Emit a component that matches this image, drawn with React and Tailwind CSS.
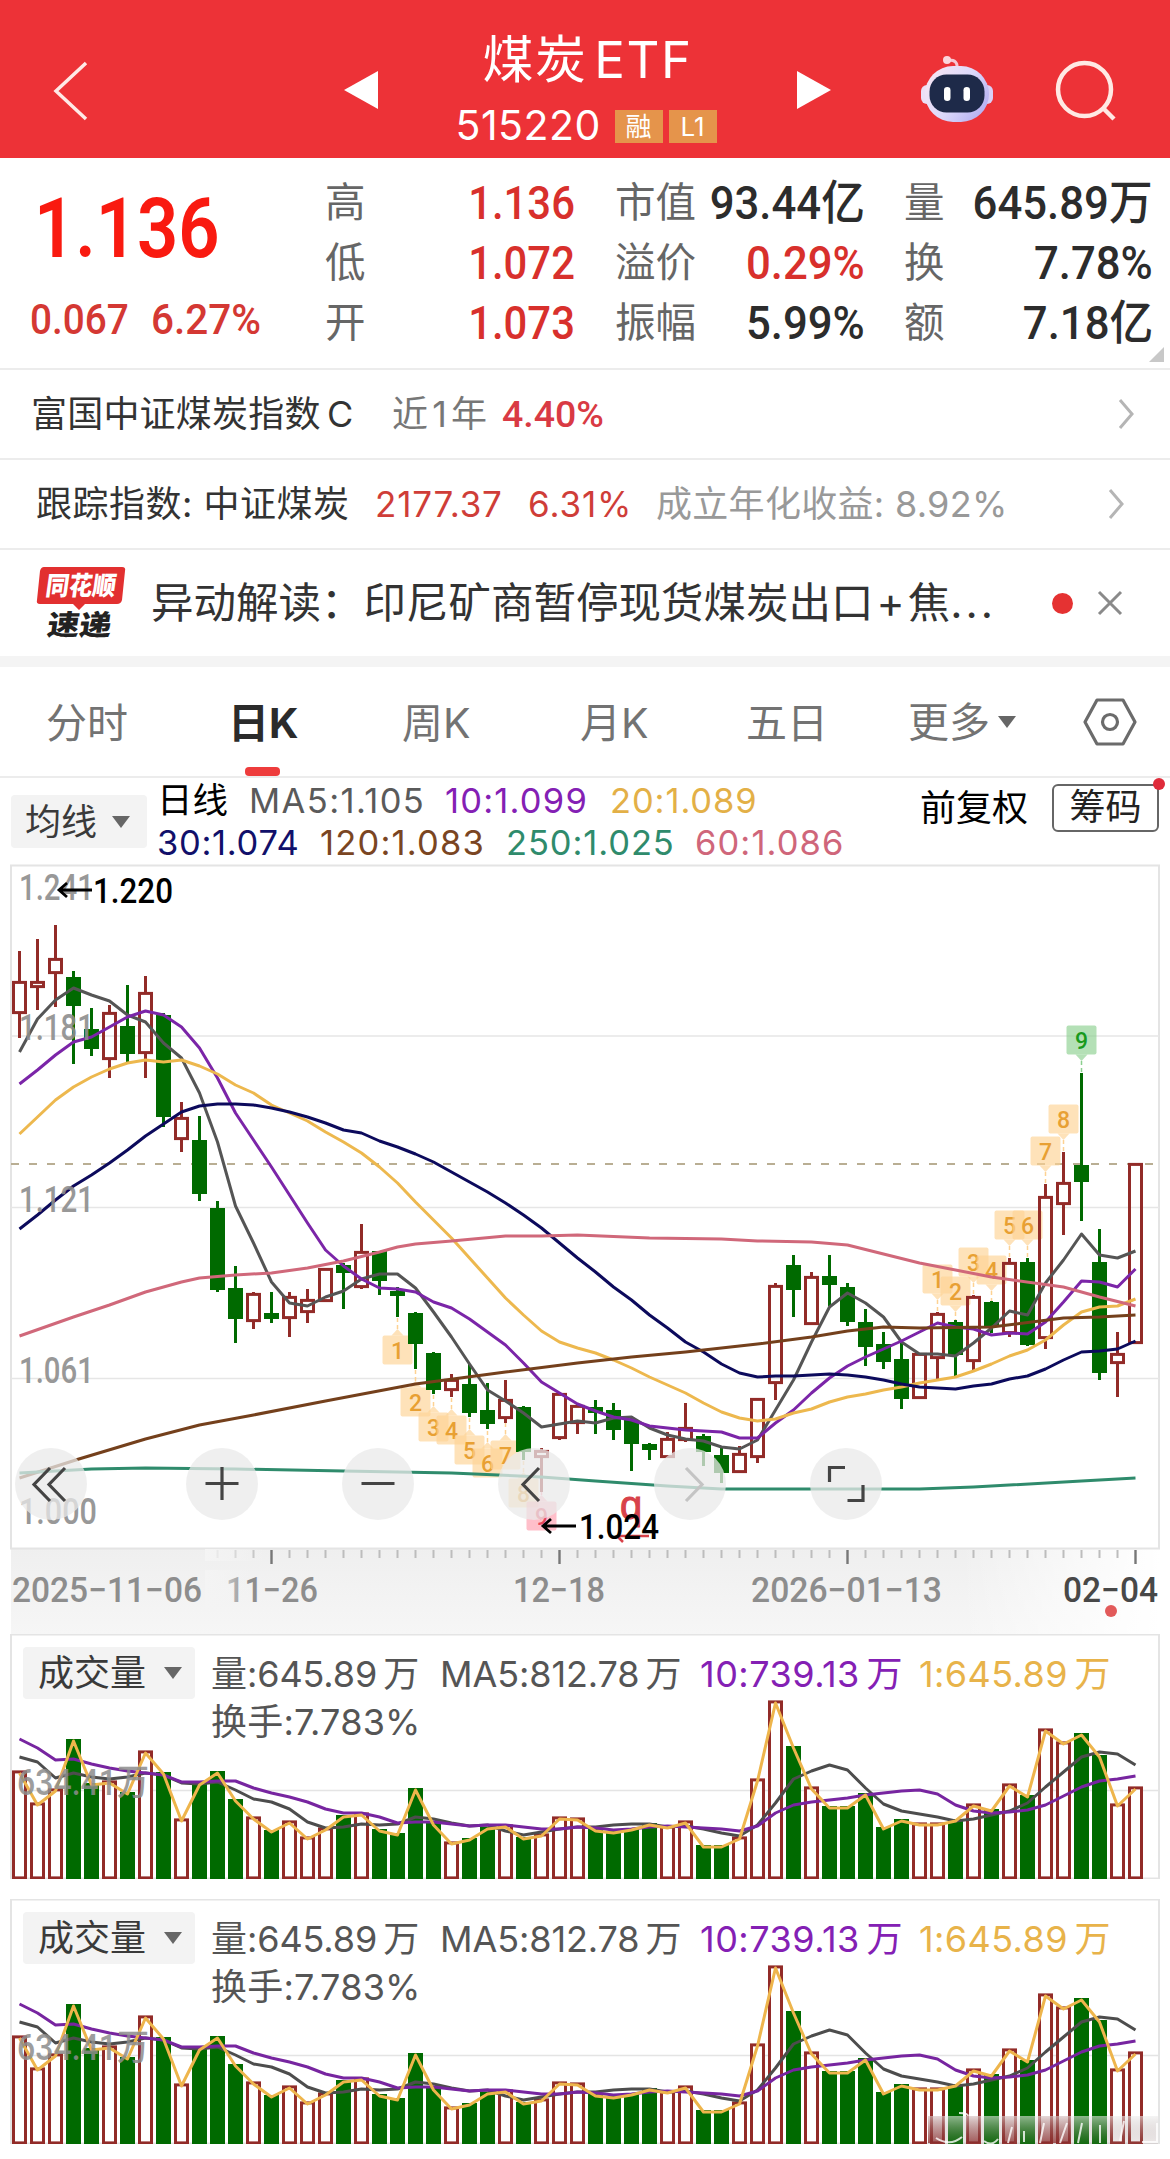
import React from "react";

// Candle: [direction, high, body top, body bottom, low], in chart pixels
const candles = [
  ["r", 951, 981, 1014, 1038], ["r", 939, 981, 988, 1010], ["r", 925, 958, 974, 1007], ["g", 971, 977, 1006, 1064],
  ["g", 1008, 1029, 1049, 1056], ["r", 1005, 1012, 1060, 1078], ["g", 985, 1026, 1054, 1062], ["r", 976, 992, 1054, 1078],
  ["g", 1013, 1015, 1117, 1127], ["r", 1102, 1117, 1140, 1152], ["g", 1116, 1140, 1194, 1201], ["g", 1201, 1208, 1290, 1292],
  ["g", 1266, 1288, 1319, 1343], ["r", 1292, 1293, 1322, 1329], ["g", 1292, 1313, 1319, 1323], ["r", 1292, 1296, 1319, 1337],
  ["r", 1289, 1299, 1313, 1323], ["r", 1268, 1268, 1302, 1302], ["g", 1263, 1265, 1273, 1309], ["r", 1224, 1251, 1288, 1289],
  ["g", 1251, 1251, 1281, 1295], ["g", 1287, 1291, 1296, 1317], ["g", 1312, 1313, 1344, 1369], ["g", 1352, 1353, 1390, 1394],
  ["r", 1374, 1379, 1391, 1397], ["g", 1364, 1384, 1413, 1417], ["g", 1383, 1410, 1424, 1429], ["r", 1380, 1399, 1419, 1423],
  ["g", 1406, 1407, 1452, 1460], ["r", 1448, 1450, 1458, 1492], ["r", 1392, 1393, 1439, 1440], ["r", 1404, 1405, 1424, 1434],
  ["g", 1400, 1407, 1413, 1434], ["g", 1403, 1410, 1430, 1440], ["g", 1418, 1420, 1444, 1471], ["g", 1443, 1444, 1450, 1460],
  ["r", 1432, 1438, 1458, 1458], ["r", 1403, 1427, 1441, 1442], ["g", 1434, 1436, 1452, 1466], ["g", 1448, 1455, 1473, 1483],
  ["r", 1446, 1453, 1473, 1473], ["r", 1398, 1398, 1458, 1463], ["r", 1283, 1285, 1384, 1400], ["g", 1255, 1265, 1290, 1317],
  ["r", 1272, 1276, 1325, 1325], ["g", 1255, 1276, 1285, 1306], ["g", 1283, 1287, 1322, 1326], ["g", 1309, 1322, 1347, 1366],
  ["g", 1332, 1344, 1362, 1369], ["g", 1343, 1359, 1399, 1409], ["r", 1353, 1353, 1399, 1399], ["r", 1312, 1313, 1359, 1380],
  ["g", 1320, 1322, 1355, 1376], ["r", 1295, 1296, 1362, 1370], ["g", 1301, 1302, 1326, 1333], ["r", 1258, 1262, 1334, 1337],
  ["g", 1258, 1262, 1345, 1346], ["r", 1184, 1196, 1339, 1349], ["r", 1152, 1182, 1205, 1235], ["g", 1073, 1165, 1182, 1221],
  ["g", 1229, 1262, 1373, 1380], ["r", 1332, 1353, 1364, 1397], ["r", 1163, 1163, 1344, 1344],
];

const ma5 = [1052, 1019, 1000, 988, 995, 1001, 1015, 1022, 1043, 1058, 1093, 1142, 1206, 1243, 1282, 1303, 1306, 1297, 1291, 1279, 1274, 1274, 1288, 1312, 1337, 1364, 1390, 1401, 1413, 1427, 1424, 1421, 1423, 1418, 1417, 1428, 1435, 1439, 1441, 1447, 1449, 1440, 1410, 1380, 1342, 1307, 1293, 1303, 1317, 1342, 1354, 1354, 1356, 1343, 1328, 1311, 1315, 1283, 1260, 1234, 1255, 1258, 1251];
const ma10 = [1084, 1070, 1055, 1042, 1037, 1027, 1017, 1011, 1015, 1027, 1048, 1078, 1113, 1140, 1167, 1195, 1223, 1250, 1266, 1279, 1288, 1289, 1292, 1302, 1308, 1319, 1332, 1345, 1363, 1382, 1393, 1404, 1411, 1417, 1420, 1426, 1428, 1430, 1431, 1432, 1438, 1438, 1423, 1410, 1393, 1378, 1366, 1357, 1349, 1341, 1332, 1323, 1327, 1329, 1335, 1333, 1334, 1322, 1302, 1281, 1282, 1287, 1269];
const ma20 = [1134, 1117, 1100, 1087, 1077, 1069, 1063, 1060, 1062, 1060, 1066, 1074, 1085, 1093, 1105, 1113, 1121, 1132, 1142, 1153, 1167, 1183, 1202, 1220, 1238, 1258, 1278, 1298, 1315, 1331, 1342, 1348, 1353, 1360, 1368, 1377, 1385, 1393, 1403, 1412, 1418, 1421, 1419, 1413, 1409, 1402, 1397, 1394, 1390, 1387, 1383, 1380, 1377, 1371, 1364, 1356, 1350, 1340, 1325, 1312, 1307, 1306, 1299];
const ma30 = [1229, 1215, 1200, 1186, 1175, 1163, 1150, 1136, 1124, 1112, 1106, 1104, 1104, 1105, 1108, 1112, 1117, 1123, 1130, 1133, 1141, 1147, 1154, 1162, 1172, 1182, 1192, 1203, 1215, 1228, 1243, 1258, 1272, 1287, 1300, 1315, 1328, 1342, 1352, 1364, 1373, 1377, 1376, 1376, 1375, 1374, 1375, 1377, 1380, 1384, 1387, 1388, 1389, 1386, 1384, 1379, 1376, 1369, 1360, 1352, 1351, 1349, 1341];
const ma60 = [[0, 1336], [3, 1317], [5, 1305], [7, 1292], [9, 1282], [10, 1278], [12, 1275], [14, 1273], [16, 1268], [18, 1261], [20, 1252], [21, 1247], [22, 1244], [24, 1241], [27, 1236], [29, 1236], [31, 1235], [35, 1238], [39, 1239], [41, 1241], [44, 1242], [46, 1245], [50, 1263], [54, 1277], [58, 1287], [60, 1297], [62, 1306]];
const ma120 = [[0, 1478], [3.3, 1459], [7, 1439], [10, 1425], [13, 1415], [17, 1401], [22, 1384], [27, 1372], [31, 1363], [34, 1357], [37, 1352], [41, 1344], [44, 1337], [46, 1331], [48, 1327], [50, 1328], [54, 1327], [58, 1318], [60, 1317], [62, 1315]];
const ma250 = [[0, 1473], [4, 1469], [7, 1468], [12, 1469], [18, 1471], [24, 1473], [29, 1477], [32, 1481], [36, 1486], [39, 1489], [46, 1489], [50, 1489], [53, 1487], [59, 1481], [62, 1478]];

const volumes = [1771, 1803, 1789, 1739, 1783, 1781, 1792, 1751, 1772, 1819, 1783, 1771, 1799, 1817, 1830, 1821, 1837, 1828, 1815, 1813, 1829, 1833, 1788, 1823, 1842, 1838, 1827, 1825, 1837, 1834, 1817, 1818, 1829, 1831, 1828, 1823, 1826, 1821, 1845, 1845, 1837, 1779, 1701, 1746, 1787, 1806, 1806, 1793, 1827, 1819, 1823, 1823, 1819, 1804, 1809, 1784, 1795, 1729, 1742, 1733, 1755, 1804, 1787];
const volMa5 = [1757, 1762, 1778, 1773, 1777, 1779, 1777, 1773, 1775, 1783, 1784, 1782, 1790, 1799, 1802, 1809, 1822, 1828, 1827, 1824, 1825, 1824, 1817, 1819, 1823, 1826, 1825, 1831, 1835, 1832, 1829, 1827, 1827, 1825, 1824, 1824, 1827, 1826, 1829, 1833, 1836, 1825, 1803, 1779, 1771, 1765, 1770, 1788, 1804, 1811, 1814, 1817, 1821, 1819, 1815, 1811, 1803, 1787, 1772, 1757, 1752, 1754, 1765];
const volMa10 = [1739, 1748, 1760, 1759, 1764, 1768, 1771, 1773, 1775, 1782, 1782, 1781, 1781, 1788, 1793, 1797, 1802, 1809, 1813, 1813, 1817, 1823, 1822, 1822, 1824, 1826, 1825, 1825, 1827, 1829, 1829, 1827, 1828, 1830, 1829, 1827, 1826, 1827, 1828, 1829, 1831, 1826, 1813, 1805, 1802, 1800, 1798, 1795, 1793, 1791, 1790, 1794, 1805, 1811, 1813, 1812, 1810, 1805, 1796, 1787, 1781, 1779, 1776];

// TD sequence marks: [index, center y, digit, side, style]
const marks = [
  [21, 1350, "1", "below"], [22, 1402, "2", "below"], [23, 1427, "3", "below"], [24, 1430, "4", "below"],
  [25, 1450, "5", "below"], [26, 1463, "6", "below"], [27, 1455, "7", "below"], [28, 1493, "8", "below"],
  [29, 1516, "9", "below", "pink"],
  [51, 1279, "1", "above"], [52, 1291, "2", "above"], [53, 1262, "3", "above"], [54, 1270, "4", "above"],
  [55, 1225, "5", "above"], [56, 1225, "6", "above"], [57, 1151, "7", "above"], [58, 1119, "8", "above"],
  [59, 1040, "9", "above", "green"],
];

const markColors = {
  orange: { bg: "#fdd293", text: "#e8a033" },
  pink: { bg: "#ff9cae", text: "#e8455c" },
  green: { bg: "#8ccf8f", text: "#189a1c" },
};

const RED = "#922b28";
const GREEN = "#006a00";

const xAt = (i) => 19.5 + i * 18;
const points = (list) =>
  list.map((p, i) => (Array.isArray(p) ? `${xAt(p[0])},${p[1]}` : `${xAt(i)},${p}`)).join(" ");

function Line({ data, color, width = 3 }) {
  return (
    <polyline points={points(data)} fill="none" stroke={color} strokeWidth={width} strokeLinejoin="round" />
  );
}

function Label({ x, y, w, size = 36, fill = "#8d8d8d", children, ...rest }) {
  return (
    <text x={x} y={y} textLength={w} lengthAdjust="spacingAndGlyphs" fontSize={size} fill={fill} {...rest}>
      {children}
    </text>
  );
}

function Mark({ mark }) {
  const [i, y, digit, side, tone = "orange"] = mark;
  const x = xAt(i);
  const c = markColors[tone];
  const d = side === "below" ? -1 : 1;
  const tip = y + d * 21;
  return (
    <g>
      <rect x={x - 15} y={y - 14.5} width="30" height="29" rx="2" fill={c.bg} opacity="0.65" />
      <path d={`M${x - 6} ${y + d * 14.5}L${x} ${tip}L${x + 6} ${y + d * 14.5}Z`} fill={c.bg} opacity="0.65" />
      <path d={`M${x} ${tip}V${tip + d * 11}`} stroke={c.bg} strokeWidth="1.5" strokeDasharray="4 3" />
      <text x={x} y={y + 9} fontSize="23" fontWeight="500" textAnchor="middle" fill={c.text}>
        {digit}
      </text>
    </g>
  );
}

function RoundButton({ x, faded, children }) {
  return (
    <g>
      <circle cx={x} cy="1484" r="36" fill="#e9e9e9" opacity="0.75" />
      <g fill="none" stroke={faded ? "#c4c4c4" : "#444"} strokeWidth="3.2">
        {children}
      </g>
    </g>
  );
}

function KChart() {
  return (
    <svg viewBox="0 862 1170 772" className="block w-full h-[772px] font-[Roboto]">
      <defs>
        <linearGradient id="strip" x1="0" x2="0" y1="0" y2="1">
          <stop offset="0" stopColor="#efefef" />
          <stop offset="1" stopColor="#f6f6f6" />
        </linearGradient>
        <linearGradient id="stripEnd" x1="0" x2="1" y1="0" y2="0">
          <stop offset="0" stopColor="#fff" stopOpacity="0" />
          <stop offset="1" stopColor="#fff" />
        </linearGradient>
        <linearGradient id="tickFade" x1="0" x2="1" y1="0" y2="0">
          <stop offset="0" stopColor="#f4f4f4" />
          <stop offset="1" stopColor="#f4f4f4" stopOpacity="0" />
        </linearGradient>
      </defs>

      {/* frame and grid */}
      <rect x="11" y="1548" width="1148" height="86" fill="url(#strip)" />
      <rect x="960" y="1548" width="200" height="86" fill="url(#stripEnd)" />
      <rect x="11" y="865.5" width="1148" height="683" fill="#fff" stroke="#e4e4e4" strokeWidth="2" />
      <path d="M11 1036H1159M11 1207.500H1159M11 1378.500H1159" stroke="#e6e6e6" strokeWidth="1.5" />
      <path d="M11 1164H1159" stroke="#b9ae93" strokeWidth="1.8" strokeDasharray="8 10" />

      {marks.map((m, i) => (
        <Mark key={i} mark={m} />
      ))}

      {candles.map(([dir, high, top, bottom, low], i) =>
        dir === "g" ? (
          <g key={i} fill={GREEN}>
            <rect x={xAt(i) - 1.5} y={high} width="3" height={low - high} />
            <rect x={xAt(i) - 7.5} y={top} width="15" height={bottom - top} />
          </g>
        ) : (
          <g key={i} fill="none" stroke={RED} strokeWidth="3">
            <path d={`M${xAt(i)} ${high}V${top}M${xAt(i)} ${bottom}V${low}`} />
            <rect x={xAt(i) - 6} y={top + 1.4} width="12" height={bottom - top - 2.8} />
          </g>
        )
      )}

      <Line data={ma5} color="#555" />
      <Line data={ma10} color="#7b25a8" />
      <Line data={ma20} color="#edb84e" />
      <Line data={ma30} color="#0c0a5c" />
      <Line data={ma60} color="#d0687a" />
      <Line data={ma120} color="#74401c" />
      <Line data={ma250} color="#2f8b6c" />

      {/* price scale */}
      <g opacity="0.9" fontWeight="500">
        <Label x="19" y="900" w="75">1.241</Label>
        <Label x="19" y="1040" w="75">1.181</Label>
        <Label x="19" y="1212" w="75">1.121</Label>
        <Label x="19" y="1383" w="75">1.061</Label>
        <Label x="19" y="1524" w="78">1.000</Label>
      </g>
      <path d="M92 890H59M67 883L59 890L67 897" fill="none" stroke="#000" strokeWidth="2.800" />
      <Label x="93" y="902.500" w="80" size="35" fill="#000" fontWeight="500">1.220</Label>

      <RoundButton x="51">
        <path d="M50 1468L34 1484.500L50 1501M65 1468L49 1484.500L65 1501" />
      </RoundButton>
      <RoundButton x="222">
        <path d="M205.500 1483.500H238.500M222 1467V1500" />
      </RoundButton>
      <RoundButton x="378">
        <path d="M361.500 1483.500H394.500" />
      </RoundButton>
      <RoundButton x="534">
        <path d="M539 1468L523 1484.500L539 1501" />
      </RoundButton>
      <RoundButton x="690" faded>
        <path d="M686 1468L702 1484.500L686 1501" />
      </RoundButton>
      <RoundButton x="846">
        <path d="M829.500 1482V1467.500H845M863 1485V1500.500H847.500" />
      </RoundButton>

      <text x="631" y="1519" fontSize="40" fill="#d8424a" stroke="#d8424a" textAnchor="middle" className="font-['Liberation_Sans']">
        q
      </text>
      <path d="M617 1536H649M617 1536L623 1542" stroke="#d8424a" strokeWidth="2.500" fill="none" />
      <path d="M576 1526H543M551 1519L543 1526L551 1533" fill="none" stroke="#000" strokeWidth="2.800" />
      <Label x="579" y="1539" w="80" size="35" fill="#000" fontWeight="500">1.024</Label>

      {/* time scale */}
      {candles.map((_, i) => {
        const major = i === 14 || i === 30 || i === 46 || i === 62;
        return i < 11 ? null : (
          <path
            key={i}
            d={`M${xAt(i)} 1550V${major ? 1564 : 1558}`}
            stroke={major ? "#777" : "#bdbdbd"}
            strokeWidth={major ? 2.4 : 2}
          />
        );
      })}
      <rect x="205" y="1549" width="60" height="12" fill="url(#tickFade)" />
      <g className="font-medium">
        <Label x="12" y="1602" w="190" size="35">2025−11−06</Label>
        <Label x="226" y="1602" w="92" size="35">11−26</Label>
        <Label x="513" y="1602" w="92" size="35">12−18</Label>
        <Label x="751" y="1602" w="191" size="35">2026−01−13</Label>
        <Label x="1063" y="1602" w="95" size="35" fill="#484848">02−04</Label>
      </g>
      <rect x="205" y="1570" width="45" height="40" fill="url(#tickFade)" />
      <circle cx="1111" cy="1611" r="6" fill="#e25a5a" />
    </svg>
  );
}

function Caret({ className }) {
  return (
    <svg viewBox="0 0 18 12" className={`w-[18px] h-[12px] shrink-0 ${className || ""}`}>
      <path d="M0 0H18L9 12Z" fill="#666" />
    </svg>
  );
}

function VolumePanel({ watermark }) {
  return (
    <section className="relative h-[245px] shrink-0">
      <svg viewBox="0 1634 1170 245" className="absolute inset-0 w-full h-full font-[Roboto]">
        <rect x="11" y="1634.500" width="1148" height="244" fill="#fff" stroke="#e4e4e4" strokeWidth="2" />
        <path d="M11 1790.500H1159" stroke="#e4e4e4" strokeWidth="1.500" />
        {volumes.map((top, i) =>
          candles[i][0] === "g" ? (
            <rect key={i} x={xAt(i) - 7.5} y={top} width="15" height={1879 - top} fill={GREEN} />
          ) : (
            <rect
              key={i}
              x={xAt(i) - 6}
              y={top + 0.9}
              width="12"
              height={1877 - top}
              fill="#fff"
              stroke={RED}
              strokeWidth="3"
            />
          )
        )}
        <Line data={volMa5} color="#4d4d4d" />
        <Line data={volMa10} color="#7725a0" />
        <Line data={volumes.map((v) => v + 2)} color="#eeb54c" />
        <text
          x="17"
          y="1795"
          textLength="132"
          lengthAdjust="spacingAndGlyphs"
          fontSize="36"
          fontWeight="500"
          fill="#8d8d8d"
          opacity="0.85"
          className="font-[Roboto,'Noto_Sans_CJK_SC',sans-serif]"
        >
          634.41万
        </text>
        {watermark && (
          <g>
            <defs>
              <linearGradient id="haze" x1="0" x2="0" y1="0" y2="1">
                <stop offset="0" stopColor="#eee" stopOpacity="0.6" />
                <stop offset="1" stopColor="#8a7070" stopOpacity="0.15" />
              </linearGradient>
              <linearGradient id="streak" x1="0" x2="0" y1="0" y2="1">
                <stop offset="0" stopColor="#8a3a3a" stopOpacity="0.15" />
                <stop offset="1" stopColor="#8a2a2a" stopOpacity="0.75" />
              </linearGradient>
            </defs>
            <rect x="928" y="1851" width="230" height="28" fill="url(#haze)" />
            <path
              d="M928 1851H944V1878H928ZM967 1851H980V1878H967ZM1002 1851H1014V1878H1002ZM1040 1851H1070V1878H1040Z"
              fill="url(#streak)"
            />
            <path
              d="M936 1873Q950 1882 962 1872M959 1848Q968 1848 968 1851M984 1876Q992 1882 998 1874M1008 1878L1012 1862M1024 1866V1877M1044 1858L1040 1878M1060 1878L1067 1858M1082 1858L1078 1878M1100 1860V1878M1120 1876L1124 1856M1142 1877H1157V1858"
              fill="none"
              stroke="#fff"
              strokeWidth="2"
              opacity="0.8"
            />
          </g>
        )}
      </svg>

      <div className="relative flex items-start pt-[13px] pl-[23px] text-[36px] text-[#555]">
        <div className="flex items-center w-[172px] h-[52px] pl-[15px] bg-[#f3f3f3] rounded-[4px] text-[#3a3a3a]">
          <span className="w-[126px]">成交量</span>
          <Caret />
        </div>
        <div className="ml-[16px] pt-[3px] leading-[48px]">
          <div className="flex whitespace-nowrap tracking-[-0.100px] [word-spacing:-4px]">
            <span className="w-[229px]">量:645.89 万</span>
            <span className="w-[260px]">MA5:812.78 万</span>
            <span className="w-[219px] tracking-[0.500px] text-[#8420b4]">10:739.13 万</span>
            <span className="tracking-[0.400px] text-[#e8b34a]">1:645.89 万</span>
          </div>
          <div className="tracking-[0.200px]">换手:7.783%</div>
        </div>
      </div>
    </section>
  );
}

function Quote({ label, value, red, wide }) {
  return (
    <div className="flex items-center justify-between h-[60px]">
      <span className="text-[40.500px] text-[#666]">{label}</span>
      <span
        className={`inline-block origin-right whitespace-nowrap font-medium text-[47px] ${
          wide ? "scale-x-[0.93]" : "scale-x-[0.89]"
        } ${red ? "text-[#d8302c]" : "text-[#2c2c2c]"}`}
      >
        {value}
      </span>
    </div>
  );
}

function Chevron() {
  return (
    <svg viewBox="0 0 16 30" className="w-[16px] h-[30px]" fill="none" stroke="#b5b5b5" strokeWidth="3">
      <path d="M2 1L14 15L2 29" />
    </svg>
  );
}

function Header() {
  return (
    <header className="flex h-[158px] bg-[#ed3237] text-white">
      <div className="w-[344px] pl-[52px] pt-[61px]">
        <svg viewBox="0 0 36 60" className="w-[36px] h-[60px]" fill="none" stroke="#ffe9e6" strokeWidth="3.500">
          <path d="M34 2L4 30L34 58" />
        </svg>
      </div>
      <svg viewBox="0 0 34 38" className="w-[34px] h-[38px] mt-[71px]">
        <path d="M34 0V38L0 19Z" fill="#fff" />
      </svg>
      <div className="w-[419px] flex flex-col items-center">
        <h1 className="mt-[24px] h-[72px] leading-[72px] text-[51px] tracking-[1.500px] [word-spacing:-9px] whitespace-nowrap">
          煤炭 ETF
        </h1>
        <div className="flex items-center h-[60px] -ml-[3px]">
          <span className="w-[159px] text-[41px] tracking-[0.500px]">515220</span>
          <span className="w-[48px] h-[33px] mr-[6px] bg-[#e5944b] text-[26px] leading-[33px] text-center">融</span>
          <span className="w-[48px] h-[33px] bg-[#e5944b] text-[26px] leading-[33px] text-center">L1</span>
        </div>
      </div>
      <svg viewBox="0 0 34 38" className="w-[34px] h-[38px] mt-[71px]">
        <path d="M0 0V38L34 19Z" fill="#fff" />
      </svg>

      {/* robot assistant */}
      <svg viewBox="920 54 76 70" className="w-[76px] h-[70px] ml-[89px] mt-[54px]">
        <defs>
          <linearGradient id="shell" x1="0" x2="1" y1="0" y2="0.6">
            <stop offset="0" stopColor="#fbe7f2" />
            <stop offset="0.6" stopColor="#dcd9fb" />
            <stop offset="1" stopColor="#b9b4f2" />
          </linearGradient>
        </defs>
        <path d="M957 68Q958 60 949 60" fill="none" stroke="#f6c6d2" strokeWidth="3" />
        <circle cx="947" cy="60" r="4" fill="#fbd5dc" />
        <rect x="921" y="85" width="12" height="19" rx="6" fill="#ecdff6" />
        <rect x="981" y="85" width="12" height="19" rx="6" fill="#d9cff6" />
        <rect x="925" y="66" width="64" height="56" rx="28" fill="url(#shell)" />
        <rect x="929.500" y="74.500" width="55" height="38" rx="17" fill="#1e2a49" />
        <rect x="944" y="87" width="6.500" height="14" rx="3.200" fill="#fff" />
        <rect x="963.500" y="87" width="6.500" height="14" rx="3.200" fill="#fff" />
      </svg>
      <svg viewBox="0 0 62 62" className="w-[62px] h-[62px] ml-[59px] mt-[59px]" fill="none" stroke="#ffe9e4" strokeWidth="4.500">
        <circle cx="29.500" cy="30.500" r="26.500" />
        <path d="M48 49L59 60" />
      </svg>
    </header>
  );
}

function App() {
  return (
    <div className="w-[1170px] h-[2159px] overflow-hidden flex flex-col bg-white font-[Inter,'Noto_Sans_CJK_SC',sans-serif]">
      <Header />

      {/* Quote summary */}
      <section className="relative flex h-[212px] border-b-2 border-[#ececec] font-[Roboto,'Noto_Sans_CJK_SC',sans-serif]">
        <div className="w-[325px] pl-[30px]">
          <div className="mt-[16px] ml-[4px] h-[110px] leading-[110px] text-[84px] font-semibold text-[#f91a10] origin-left scale-x-[0.86]">
            1.136
          </div>
          <div className="flex mt-[5px] h-[60px] leading-[60px] text-[43px] font-medium text-[#d43833]">
            <span className="w-[121px]">
              <span className="inline-block origin-left scale-x-[0.900]">0.067</span>
            </span>
            <span className="inline-block origin-left scale-x-[0.940]">6.27%</span>
          </div>
        </div>
        <div className="w-[250px] pt-[15px]">
          <Quote label="高" value="1.136" red />
          <Quote label="低" value="1.072" red />
          <Quote label="开" value="1.073" red />
        </div>
        <div className="w-[250px] ml-[40px] pt-[15px]">
          <Quote label="市值" value="93.44亿" wide />
          <Quote label="溢价" value="0.29%" red wide />
          <Quote label="振幅" value="5.99%" wide />
        </div>
        <div className="w-[249px] ml-[39px] pt-[15px]">
          <Quote label="量" value="645.89万" wide />
          <Quote label="换" value="7.78%" wide />
          <Quote label="额" value="7.18亿" wide />
        </div>
        <svg viewBox="0 0 15 15" className="absolute right-[6px] bottom-[6px] w-[15px] h-[15px]">
          <path d="M15 0V15H0Z" fill="#c8c8c8" />
        </svg>
      </section>

      {/* Related fund */}
      <div className="flex items-center h-[90px] pl-[31px] pr-[36px] border-b-2 border-[#ececec] text-[36px] text-[#333] whitespace-nowrap">
        <span className="w-[361px] tracking-[0.200px] [word-spacing:-4px]">富国中证煤炭指数 C</span>
        <span className="w-[110px] text-[#777] [word-spacing:-6px]">近 1 年</span>
        <span className="font-[Roboto] font-medium text-[37.500px] text-[#d93a44]">4.40%</span>
        <span className="ml-auto">
          <Chevron />
        </span>
      </div>

      {/* Tracked index */}
      <div className="flex items-center h-[90px] pl-[36px] pr-[46px] border-b-2 border-[#ececec] text-[36px] text-[#333] whitespace-nowrap">
        <span className="w-[339px] tracking-[0.500px]">跟踪指数: 中证煤炭</span>
        <span className="w-[153px] text-[35px] tracking-[0.800px] text-[#cf3d38]">2177.37</span>
        <span className="w-[128px] text-[35px] tracking-[0.900px] text-[#cf3d38]">6.31%</span>
        <span className="tracking-[0.300px] text-[#999]">成立年化收益: 8.92%</span>
        <span className="ml-auto">
          <Chevron />
        </span>
      </div>

      {/* News ticker */}
      <div className="flex items-center h-[106px] pl-[36px] pr-[47px] text-[#333]">
        <div className="w-[115px]">
          <svg viewBox="0 0 92 76" className="w-[92px] h-[76px] overflow-visible font-['Noto_Sans_CJK_SC']">
            <path d="M8 2H86Q90 2 89 6L86 35Q85 39 81 39H49L43 45L37 39H4Q0 39 1 35L4 6Q5 2 8 2Z" fill="#e23030" />
            <text x="10" y="30" fontSize="26" fontWeight="900" fill="#fff" textLength="70" lengthAdjust="spacingAndGlyphs" transform="skewX(-8) translate(3 0)">
              同花顺
            </text>
            <text x="14" y="70" fontSize="28" fontWeight="900" fill="#222" textLength="64" lengthAdjust="spacingAndGlyphs" transform="skewX(-8) translate(6 0)">
              速递
            </text>
          </svg>
        </div>
        <span className="text-[42.500px] whitespace-nowrap">
          异动解读：印尼矿商暂停现货煤炭出口<span className="mx-[3px]">+</span>焦<span className="tracking-[3px]">...</span>
        </span>
        <span className="ml-auto w-[21px] h-[21px] rounded-full bg-[#e53232]"></span>
        <svg viewBox="0 0 26 26" className="ml-[24px] w-[26px] h-[26px]" fill="none" stroke="#8a8a8a" strokeWidth="3">
          <path d="M2 2L24 24M24 2L2 24" />
        </svg>
      </div>
      <div className="h-[11px] bg-[#f4f4f4]"></div>

      {/* Period tabs */}
      <nav className="flex h-[111px] pl-[46px] border-b-2 border-[#ececec] text-[41px] leading-[112px] text-[#737373] whitespace-nowrap">
        <span className="w-[182px]">分时</span>
        <span className="relative w-[174px] font-bold text-[#2b2b2b]">
          日K
          <i className="absolute left-[17px] bottom-0 w-[35px] h-[9px] rounded-[4px] bg-[#ee3c3c]"></i>
        </span>
        <span className="w-[178px]">周K</span>
        <span className="w-[166px]">月K</span>
        <span className="w-[162px]">五日</span>
        <span className="flex items-center w-[174px]">
          更多
          <Caret className="ml-[8px]" />
        </span>
        <svg viewBox="0 0 54 48" className="w-[54px] h-[48px] ml-[1px] mt-[31px]" fill="none" stroke="#6b6b6b" strokeWidth="3.200">
          <path d="M14 2H40L52 24L40 46H14L2 24Z" strokeLinejoin="round" />
          <circle cx="27" cy="24" r="7.500" />
        </svg>
      </nav>

      {/* Moving average legend */}
      <div className="flex h-[84px] pl-[11px] text-[34.500px] whitespace-nowrap">
        <div className="flex items-center w-[136px] h-[53px] mt-[17px] pl-[14px] bg-[#f3f3f3] rounded-[4px] text-[36px] text-[#3a3a3a]">
          <span className="w-[87px]">均线</span>
          <Caret />
        </div>
        <div className="ml-[10px] w-[763px] pt-[2px] leading-[42px]">
          <div className="flex">
            <span className="w-[92px] text-[35.500px] text-black">日线</span>
            <span className="w-[196px] tracking-[1.400px] text-[#5a5a5a]">MA5:1.105</span>
            <span className="w-[165px] tracking-[1.200px] text-[#8420b4]">10:1.099</span>
            <span className="tracking-[0.900px] text-[#e3b047]">20:1.089</span>
          </div>
          <div className="flex">
            <span className="w-[163px] tracking-[0.700px] text-[#11106a]">30:1.074</span>
            <span className="w-[186px] tracking-[1.200px] text-[#7a4522]">120:1.083</span>
            <span className="w-[189px] tracking-[0.900px] text-[#2f8b6c]">250:1.025</span>
            <span className="tracking-[1.100px] text-[#cf667a]">60:1.086</span>
          </div>
        </div>
        <span className="w-[132px] pt-[5px] text-[36px] leading-[50px] text-black">前复权</span>
        <div className="relative mt-[6px] w-[107px] h-[48px] border-2 border-[#666] rounded-[6px] text-center text-[36px] leading-[43px] text-[#222]">
          筹码
          <i className="absolute -right-[8px] -top-[8px] w-[12px] h-[12px] rounded-full bg-[#df2b3a]"></i>
        </div>
      </div>

      <KChart />
      <VolumePanel />
      <div className="h-[20px] shrink-0"></div>
      <VolumePanel watermark />
    </div>
  );
}

export default App;
